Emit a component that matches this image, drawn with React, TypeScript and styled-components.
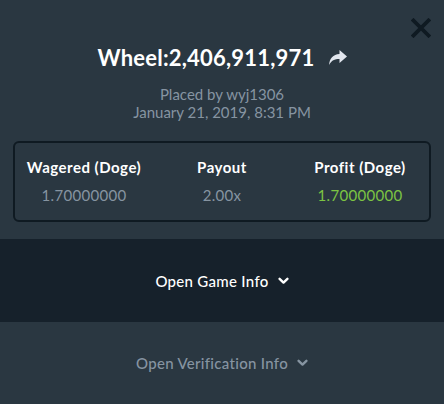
import React from "react";
import styled, { createGlobalStyle } from "styled-components";

const Global = createGlobalStyle`
  html, body { margin: 0; padding: 0; background: #2a3741; }
  body { font-family: "Lato", "Open Sans", sans-serif; -webkit-font-smoothing: antialiased; }
`;

const Modal = styled.div`
  width: 444px;
  height: 404px;
  background: #2a3741;
  display: flex;
  flex-direction: column;
  position: relative;
  overflow: hidden;
`;

const Close = styled.button`
  position: absolute;
  top: 17px;
  right: 12px;
  width: 22px;
  height: 22px;
  padding: 0;
  border: none;
  background: transparent;
  display: flex;
  align-items: center;
  justify-content: center;
`;

const Top = styled.div`
  display: flex;
  flex-direction: column;
  align-items: center;
  padding: 43px 13px 17px;
`;

const TitleRow = styled.div`
  display: flex;
  align-items: center;
  gap: 14px;
  height: 30px;
  margin-left: 2px;
`;

const Title = styled.h1`
  margin: 0;
  font-size: 22px;
  line-height: 30px;
  font-weight: 700;
  color: #ffffff;
  letter-spacing: 0.2px;
`;

const Meta = styled.div`
  margin-top: 12px;
  text-align: center;
  color: #8694a1;
  font-size: 15px;
  line-height: 18px;
`;

const StatsBox = styled.div`
  margin-top: 20px;
  align-self: stretch;
  border: 2px solid #0f1a22;
  border-radius: 6px;
  display: grid;
  grid-template-columns: 1fr 1fr 1fr;
  padding: 15px 0 16px;
`;

const Stat = styled.div`
  display: flex;
  flex-direction: column;
  align-items: center;
  gap: 10px;
`;

const StatLabel = styled.div`
  color: #ffffff;
  font-weight: 700;
  font-size: 15px;
  line-height: 18px;
  letter-spacing: 0.5px;
`;

const StatValue = styled.div<{ $green?: boolean }>`
  color: ${(p) => (p.$green ? "#7cc443" : "#8694a1")};
  font-size: 15px;
  line-height: 18px;
  letter-spacing: 0.3px;
`;

const Section = styled.button<{ $dark?: boolean }>`
  all: unset;
  box-sizing: border-box;
  height: ${(p) => (p.$dark ? "83px" : "82px")};
  background: ${(p) => (p.$dark ? "#16212b" : "#2a3741")};
  color: ${(p) => (p.$dark ? "#ffffff" : "#8694a1")};
  display: flex;
  align-items: center;
  justify-content: center;
  gap: 9px;
  font-size: 15px;
  letter-spacing: 0.3px;
  font-weight: 500;
  font-family: "Lato", "Open Sans", sans-serif;
`;

const Chevron = ({ color }: { color: string }) => (
  <svg width="11" height="8" viewBox="0 0 11 8">
    <path d="M1.6 1.8 L5.5 5.6 L9.4 1.8" fill="none" stroke={color} strokeWidth="2.4" strokeLinecap="round" strokeLinejoin="round" />
  </svg>
);

export default function App() {
  return (
    <>
      <Global />
      <Modal>
        <Close aria-label="Close">
          <svg width="20" height="20" viewBox="0 0 20 20">
            <path d="M2.5 2.5 L17.5 17.5 M17.5 2.5 L2.5 17.5" stroke="#0f1a22" strokeWidth="3.8" strokeLinecap="square" />
          </svg>
        </Close>
        <Top>
          <TitleRow>
            <Title>Wheel:2,406,911,971</Title>
            <svg width="20" height="18" viewBox="0 0 20 18">
              <path d="M11.5 1 L19 7.5 L11.5 14 L11.5 10 C6.5 10 3.5 11.5 1 16 C1.5 9.5 5 5.5 11.5 5 Z" fill="#e1e6ee" />
            </svg>
          </TitleRow>
          <Meta>
            Placed by wyj1306
            <br />
            January 21, 2019, 8:31 PM
          </Meta>
          <StatsBox>
            <Stat>
              <StatLabel>Wagered (Doge)</StatLabel>
              <StatValue>1.70000000</StatValue>
            </Stat>
            <Stat>
              <StatLabel>Payout</StatLabel>
              <StatValue>2.00x</StatValue>
            </Stat>
            <Stat>
              <StatLabel>Profit (Doge)</StatLabel>
              <StatValue $green>1.70000000</StatValue>
            </Stat>
          </StatsBox>
        </Top>
        <Section $dark>
          Open Game Info <Chevron color="#ffffff" />
        </Section>
        <Section>
          Open Verification Info <Chevron color="#8694a1" />
        </Section>
      </Modal>
    </>
  );
}
